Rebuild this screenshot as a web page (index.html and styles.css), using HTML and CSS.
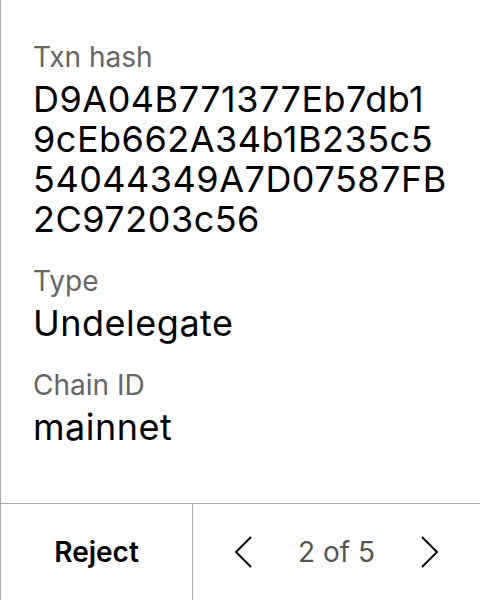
FILE: index.html
```html
<!DOCTYPE html>
<html>
<head>
<meta charset="utf-8">
<link rel="stylesheet" href="styles.css">
</head>
<body>
<div class="screen">
  <div class="content">
    <div class="field">
      <div class="label">Txn hash</div>
      <div class="value hash">D9A04B771377Eb7db1<br>9cEb662A34b1B235c5<br>54044349A7D07587FB<br>2C97203c56</div>
    </div>
    <div class="field">
      <div class="label">Type</div>
      <div class="value">Undelegate</div>
    </div>
    <div class="field">
      <div class="label">Chain ID</div>
      <div class="value">mainnet</div>
    </div>
  </div>
  <div class="footer">
    <div class="reject">Reject</div>
    <div class="pager">
      <svg class="chev" viewBox="0 0 32 32" width="32" height="32"><path d="M24 1 L9 16 L24 31" fill="none" stroke="#000" stroke-width="2"/></svg>
      <span class="count">2 of 5</span>
      <svg class="chev" viewBox="0 0 32 32" width="32" height="32"><path d="M8 1 L23 16 L8 31" fill="none" stroke="#000" stroke-width="2"/></svg>
    </div>
  </div>
</div>
</body>
</html>
```

FILE: styles.css
```css
html, body {
  margin: 0;
  padding: 0;
  background: #fff;
}
body {
  font-family: Inter, "Noto Sans", sans-serif;
  color: #000;
}
.screen {
  width: 480px;
  height: 600px;
  box-sizing: border-box;
  border-left: 1px solid #aaa;
  display: flex;
  flex-direction: column;
}
.content {
  flex: 1;
  padding: 39px 24px 0 32px;
  display: flex;
  flex-direction: column;
  gap: 24px;
}
.label {
  font-size: 28px;
  line-height: 36px;
  color: #666;
}
.value {
  font-size: 36px;
  line-height: 40px;
  letter-spacing: 0.5px;
  margin-top: 4px;
}
.hash {
  white-space: nowrap;
}
.footer {
  height: 96px;
  border-top: 1px solid #aaa;
  display: flex;
}
.reject {
  width: 191px;
  border-right: 1px solid #aaa;
  display: flex;
  align-items: center;
  justify-content: center;
  font-size: 28px;
  font-weight: 600;
}
.pager {
  flex: 1;
  display: flex;
  align-items: center;
  justify-content: space-between;
  padding: 0 34px;
}
.count {
  font-size: 28px;
  color: #555;
}
.chev {
  display: block;
}
```
